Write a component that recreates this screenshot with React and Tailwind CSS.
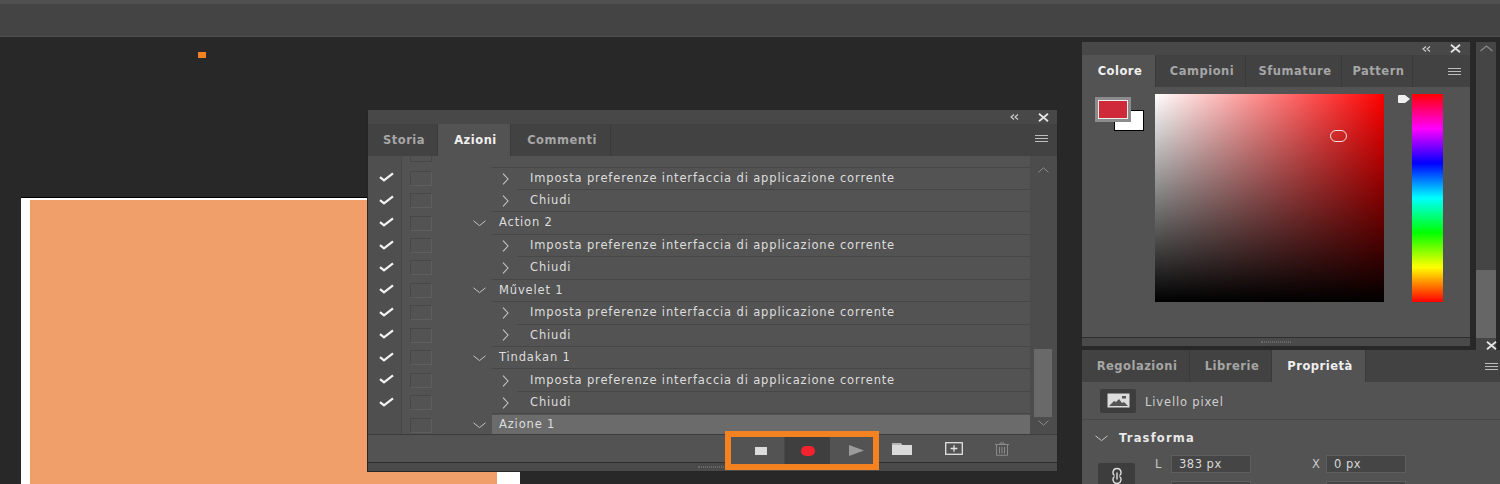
const sans = "font-['DejaVu_Sans',sans-serif]";

function Close({ className = "" }) {
  return (
    <svg width="11" height="9" viewBox="0 0 11 9" className={className}>
      <path d="M1 .8 10 8.2M10 .8 1 8.2" stroke="#e4e4e4" strokeWidth="1.8" fill="none" />
    </svg>
  );
}
function Collapse() {
  return (
    <svg width="9" height="6" viewBox="0 0 9 6">
      <path d="M4 .5 1 3l3 2.500M8 .5 5 3l3 2.500" stroke="#d0d0d0" strokeWidth="1.100" fill="none" />
    </svg>
  );
}
function Menu() {
  return (
    <svg width="13" height="7" viewBox="0 0 13 7">
      <path d="M0 .5h13M0 3.500h13M0 6.500h13" stroke="#bdbdbd" strokeWidth="1" />
    </svg>
  );
}
function Chevron({ dir }) {
  return dir === "down" ? (
    <svg width="13" height="7" viewBox="0 0 13 7" className="shrink-0">
      <path d="M.5 .8 6.500 5.600 12.500 .8" stroke="#c4c4c4" strokeWidth="1" fill="none" />
    </svg>
  ) : (
    <svg width="7" height="12" viewBox="0 0 7 12" className="shrink-0">
      <path d="M1 .6 6 6 1 11.400" stroke="#c4c4c4" strokeWidth="1.100" fill="none" />
    </svg>
  );
}
function Check() {
  return (
    <svg width="15" height="10" viewBox="0 0 15 10">
      <path d="M1 5.200 5 8.400 14 1.400" stroke="#f2f2f2" strokeWidth="2.300" fill="none" />
    </svg>
  );
}
function Tab({ label, active, w }) {
  return (
    <div
      style={{ width: w }}
      className={`flex items-center justify-center border-r border-[#3a3a3a] pl-[3px] pt-[2px] text-[11.5px] font-bold tracking-[0.5px] ${
        active ? "bg-[#535353] text-[#f0f0f0]" : "text-[#a6a6a6]"
      }`}
    >
      {label}
    </div>
  );
}
function Grip() {
  return <div className="h-[2px] w-[30px] border-y border-dotted border-[#6a6a6a]" />;
}

const action = "Imposta preferenze interfaccia di applicazione corrente";
const rows = [
  ["a", action],
  ["c", "Chiudi"],
  ["g", "Action 2"],
  ["a", action],
  ["c", "Chiudi"],
  ["g", "Művelet 1"],
  ["a", action],
  ["c", "Chiudi"],
  ["g", "Tindakan 1"],
  ["a", action],
  ["c", "Chiudi"],
  ["s", "Azione 1"],
];

function Row({ kind, label }) {
  const group = kind === "g" || kind === "s";
  return (
    <div className="flex h-[22.45px] items-stretch">
      <div className="flex w-[34px] shrink-0 items-center justify-center border-r border-[#474747] bg-[#4f4f4f] pb-[3px] pl-[4px]">
        {kind !== "s" && <Check />}
      </div>
      <div className="flex w-[90px] shrink-0 items-center pl-[8px]">
        <div className="mb-[1px] h-[15px] w-[22px] shrink-0 border border-[#484848] border-r-[#5e5e5e] border-b-[#5e5e5e]" />
        {group && (
          <span className="ml-[41px] flex">
            <Chevron dir="down" />
          </span>
        )}
      </div>
      {group ? (
        <div
          className={`flex flex-1 items-center pl-[7px] text-[#dedede] ${
            kind === "s" ? "mt-[1px] h-[19px] bg-[#6b6b6b]" : "border-b border-[#474747]"
          }`}
        >
          {label}
        </div>
      ) : (
        <div className={`flex flex-1 border-[#474747] ${kind === "c" ? "border-b" : ""}`}>
          <div className="flex w-[25px] shrink-0 items-center pl-[10px]">
            <Chevron dir="right" />
          </div>
          <div
            className={`flex flex-1 items-center border-[#474747] pl-[13px] text-[#dedede] ${
              kind === "a" ? "border-b" : ""
            }`}
          >
            {label}
          </div>
        </div>
      )}
    </div>
  );
}

function ActionsPanel() {
  return (
    <div className="absolute left-[368px] top-[73px] flex h-[361px] w-[689px] flex-col rounded-t-[2px] bg-[#535353] shadow-[0_0_0_1px_#262626]">
      <div className="flex h-[14px] items-center justify-end gap-[19px] bg-[#484848] pr-[8px]">
        <Collapse />
        <Close />
      </div>
      <div className="flex h-[32px] items-stretch bg-[#424242]">
        <Tab label="Storia" w={70} />
        <Tab label="Azioni" active w={73} />
        <Tab label="Commenti" w={100} />
        <div className="ml-auto flex items-center pb-[3px] pr-[9px]">
          <Menu />
        </div>
      </div>
      <div className="flex h-[279px] overflow-hidden border-b border-[#3c3c3c] text-[11.5px] tracking-[0.85px]">
        <div className="w-[662px] shrink-0">
          <div className="flex h-[11.5px] items-stretch overflow-hidden">
            <div className="w-[34px] border-r border-[#474747] bg-[#4f4f4f]" />
            <div className="ml-[8px] h-[6px] w-[22px] border-x border-b border-[#484848]" />
            <div className="ml-[60px] flex-1 border-b border-[#474747]" />
          </div>
          {rows.map((r, i) => (
            <Row key={i} kind={r[0]} label={r[1]} />
          ))}
        </div>
        <div className="flex flex-1 flex-col items-center bg-[#4c4c4c] pr-[1px]">
          <svg width="11" height="6" viewBox="0 0 11 6" className="mt-[11px]">
            <path d="M.5 5.400 5.500 .8l5 4.600" stroke="#8c8c8c" fill="none" />
          </svg>
          <div className="mt-[176px] h-[68px] w-[18px] bg-[#696969]" />
          <svg width="11" height="6" viewBox="0 0 11 6" className="mt-[3px]">
            <path d="M.5 .6 5.500 5.200l5-4.600" stroke="#8c8c8c" fill="none" />
          </svg>
        </div>
      </div>
      <div className="flex h-[27px] items-center bg-[#535353] pl-[357px]">
        <div className="relative z-10 mt-[4px] flex h-[39px] w-[154px] shrink-0 items-stretch border-[6px] border-[#f58220] bg-[#535353]">
          <div className="flex w-[54px] items-center justify-center border-r border-[#484848] pl-[6px]">
            <div className="h-[8px] w-[12px] bg-[#dcdcdc]" />
          </div>
          <div className="flex w-[45px] items-center justify-center bg-[#3f3f3f]">
            <div className="h-[10px] w-[14px] rounded-full bg-[#f2232e]" />
          </div>
          <div className="flex flex-1 items-center justify-center pl-[10px]">
            <svg width="15" height="11" viewBox="0 0 15 11">
              <path d="M0 0 15 5.500 0 11z" fill="#9c9c9c" />
            </svg>
          </div>
        </div>
        <svg width="20" height="13" viewBox="0 0 20 13" className="ml-[13px]">
          <path d="M0 1h9l1 2h10v10H0z" fill="#dadada" />
          <path d="M0 2h9" stroke="#8f8f8f" />
        </svg>
        <svg width="18" height="13" viewBox="0 0 18 13" className="ml-[33px]">
          <rect x=".7" y=".7" width="16.600" height="11.600" fill="none" stroke="#e2e2e2" strokeWidth="1.300" />
          <path d="M9 3.200v6.600M5.600 6.500h6.800" stroke="#e2e2e2" strokeWidth="1.300" />
        </svg>
        <svg width="16" height="14" viewBox="0 0 16 14" className="ml-[31px]">
          <path d="M1 2.500h14M6 2.300V1h4v1.300M2.500 3v10.300h11V3M5.500 5v6.500M8 5v6.500M10.500 5v6.500" stroke="#8a8a8a" strokeWidth="1" fill="none" />
        </svg>
      </div>
      <div className="flex h-[9px] justify-center border-t border-[#2f2f2f] bg-[#4a4a4a] pt-[3px]">
        <Grip />
      </div>
    </div>
  );
}

function ColorPanel() {
  return (
    <div className="flex h-[304px] w-[388px] shrink-0 flex-col rounded-t-[2px] bg-[#535353]">
      <div className="flex h-[13px] items-center justify-end gap-[19px] bg-[#484848] pr-[9px]">
        <Collapse />
        <Close />
      </div>
      <div className="flex h-[32px] items-stretch bg-[#424242]">
        <Tab label="Colore" active w={74} />
        <Tab label="Campioni" w={90} />
        <Tab label="Sfumature" w={96} />
        <Tab label="Pattern" w={71} />
        <div className="ml-auto flex items-center pr-[9px]">
          <Menu />
        </div>
      </div>
      <div className="flex h-[250px] items-start pt-[7px]">
        <div className="relative ml-[13px] mt-[3px] h-[34px] w-[49px] shrink-0">
          <div className="absolute left-[19px] top-[13px] h-[21px] w-[30px] border border-black bg-white" />
          <div className="absolute left-0 top-0 h-[25px] w-[36px] border-[3px] border-[#8c8c8c] bg-[#cf2a3a] outline outline-1 -outline-offset-4 outline-[#eee]" />
        </div>
        <div className="relative ml-[11px] h-[208px] w-[229px] shrink-0 bg-[linear-gradient(to_top,#000,transparent),linear-gradient(to_right,#fff,#ff0000)]">
          <div className="absolute left-[175px] top-[36px] h-[12px] w-[17px] rounded-full border border-[#f0e0e0]" />
        </div>
        <div className="ml-[14px] mt-[1px] w-[14px] shrink-0">
          <svg width="12" height="8" viewBox="0 0 12 8">
            <path d="M0 1a1 1 0 0 1 1-1h6l5 4-5 4H1a1 1 0 0 1-1-1z" fill="#f0f0f0" />
          </svg>
        </div>
        <div className="h-[208px] w-[31px] shrink-0 bg-[linear-gradient(to_bottom,#f00,#f0f,#00f,#0ff,#0f0,#ff0,#f00)]" />
      </div>
      <div className="flex h-[9px] justify-center border-t border-[#2f2f2f] bg-[#4a4a4a] pt-[3px]">
        <Grip />
      </div>
    </div>
  );
}

function Field({ label, value, labelW, className = "" }) {
  return (
    <div className={`flex items-center ${className}`}>
      <span className="text-[11.5px] text-[#c8c8c8]" style={{ width: labelW }}>
        {label}
      </span>
      <div className="flex h-[18px] w-[80px] items-center border border-[#5e5e5e] bg-[#454545] pl-[7px] text-[11.5px] tracking-[0.5px] text-[#d8d8d8]">
        {value}
      </div>
    </div>
  );
}

function PropsPanel() {
  return (
    <div className="flex min-h-0 flex-1 flex-col bg-[#535353]">
      <div className="flex h-[32px] shrink-0 items-stretch bg-[#424242]">
        <Tab label="Regolazioni" w={108} />
        <Tab label="Librerie" w={82} />
        <Tab label="Proprietà" active w={94} />
        <div className="ml-auto flex items-center pr-[2px]">
          <Menu />
        </div>
      </div>
      <div className="flex h-[38px] shrink-0 items-center border-b border-[#474747] pl-[18px] text-[11.5px] tracking-[0.85px] text-[#d0d0d0]">
        <div className="flex h-[24px] w-[36px] items-center justify-center rounded-[2px] bg-[#3d3d3d]">
          <svg width="23" height="15" viewBox="0 0 23 15">
            <rect x=".5" y=".5" width="22" height="14" fill="#dcdcdc" />
            <path d="M2 13l5-5 2 1 3-3 3 4 2-1 4 4z" fill="#555" />
            <rect x="15" y="3" width="4" height="2.500" fill="#555" />
          </svg>
        </div>
        <span className="ml-[9px] pt-[4px]">Livello pixel</span>
      </div>
      <div className="flex items-center pl-[13px] pt-[10px] text-[11.5px] font-bold tracking-[1.2px] text-[#e8e8e8]">
        <Chevron dir="down" />
        <span className="ml-[11px]">Trasforma</span>
      </div>
      <div className="flex pl-[16px] pt-[8px]">
        <div className="mt-[8px] flex h-[30px] w-[37px] shrink-0 justify-center rounded-[2px] bg-[#3d3d3d] pt-[4px]">
          <svg width="12" height="18" viewBox="0 0 12 18">
            <path d="M3.500 8.500C1 7 1.500 1.500 6 1.500s5 5.500 2.500 7M3.500 9.500C1 11 1.500 16.500 6 16.500s5-5.500 2.500-7M6 5.500v7" stroke="#e0e0e0" strokeWidth="1.400" fill="none" />
          </svg>
        </div>
        <div className="flex-col">
          <div className="flex">
            <Field label="L" value="383 px" labelW={16} className="ml-[20px]" />
            <Field label="X" value="0 px" labelW={14} className="ml-[61px]" />
          </div>
          <div className="mt-[8px] flex">
            <Field label="" value="" labelW={16} className="ml-[20px]" />
            <Field label="" value="" labelW={14} className="ml-[61px]" />
          </div>
        </div>
      </div>
    </div>
  );
}

export default function App() {
  return (
    <div className={`flex h-[484px] w-[1500px] flex-col overflow-hidden bg-[#282828] ${sans}`}>
      <div className="h-[37px] shrink-0 border-t-[4px] border-b border-t-[#505050] border-b-[#4f4f4f] bg-[#444444]" />
      <div className="flex min-h-0 flex-1">
        <div className="relative w-[1082px] shrink-0 overflow-hidden">
          <div className="ml-[198px] mt-[15px] h-[6px] w-[8px] bg-[#f58220]" />
          <div className="ml-[21px] mt-[139px] h-[300px] w-[499px] border-t border-t-black bg-white pl-[9px] pt-[2px]">
            <div className="h-full w-[467px] bg-[#f09e6a]" />
          </div>
          <ActionsPanel />
        </div>
        <div className="flex min-w-0 flex-1 flex-col">
          <div className="flex h-[313px] shrink-0 pt-[5px]">
            <ColorPanel />
            <div className="relative ml-[6px] flex h-[308px] w-[20px] flex-col items-center bg-[#454545]">
              <svg width="13" height="7" viewBox="0 0 13 7" className="mt-[3px]">
                <path d="M.5 6 6.500 1l6 5" stroke="#8a8a8a" strokeWidth="1.200" fill="none" />
              </svg>
              <div className="mt-[218px] h-[68px] w-full bg-[#666666]" />
              <Close className="absolute -right-[1px] bottom-0" />
            </div>
          </div>
          <PropsPanel />
        </div>
      </div>
    </div>
  );
}
